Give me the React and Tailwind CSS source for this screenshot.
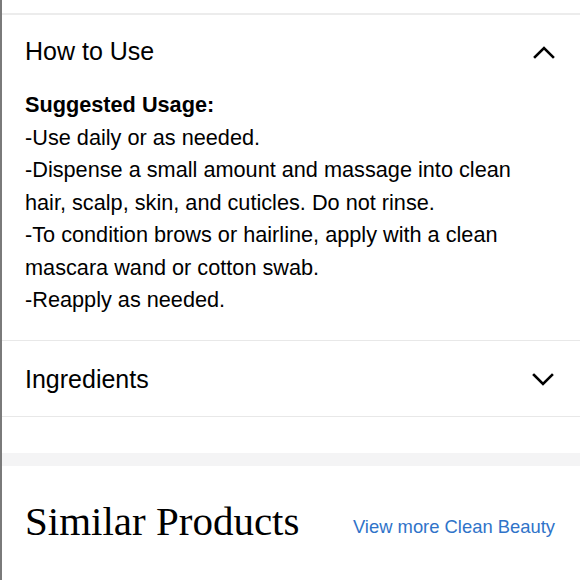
const usage = [
  "-Use daily or as needed.",
  "-Dispense a small amount and massage into clean hair, scalp, skin, and cuticles. Do not rinse.",
  "-To condition brows or hairline, apply with a clean mascara wand or cotton swab.",
  "-Reapply as needed.",
];

function Chevron({ up }) {
  return (
    <svg width="22" height="14" viewBox="0 0 22 14" fill="none" stroke="black" strokeWidth="2.6" strokeLinecap="square">
      {up ? <polyline points="2,12 11,3 20,12" /> : <polyline points="2,2 11,11 20,2" />}
    </svg>
  );
}

function App() {
  return (
    <div className="min-h-[580px] w-[580px] overflow-hidden border-l-2 border-[#7a7a7a] bg-white font-['Liberation_Sans',Arial,sans-serif] text-black">
      <div className="h-[13px]" />
      <section className="border-t-2 border-[#ececec]">
        <div className="flex h-[74px] items-center justify-between pl-[23px] pr-[25px]">
          <h2 className="text-[25px]">How to Use</h2>
          <Chevron up />
        </div>
        <div className="pb-[23px] pl-[23px] pr-[40px] text-[21.7px] leading-[32.5px]">
          <p className="font-bold">Suggested Usage:</p>
          {usage.map((line) => (
            <p key={line}>{line}</p>
          ))}
        </div>
      </section>
      <section className="border-t border-[#e8e8e8]">
        <div className="flex h-[75px] items-center justify-between pl-[23px] pr-[26px] pt-[3px]">
          <h2 className="text-[25px]">Ingredients</h2>
          <Chevron />
        </div>
      </section>
      <div className="h-[37px] border-t border-[#e8e8e8]" />
      <div className="h-[13px] bg-[#f4f4f5]" />
      <div className="flex items-center justify-between pl-[23px] pr-[25px] pt-[25px]">
        <h2 className="font-['Liberation_Serif',Georgia,serif] text-[41px]">Similar Products</h2>
        <a className="pt-[12px] text-[18.4px] text-[#2f73c9]">View more Clean Beauty</a>
      </div>
    </div>
  );
}

export default App;
